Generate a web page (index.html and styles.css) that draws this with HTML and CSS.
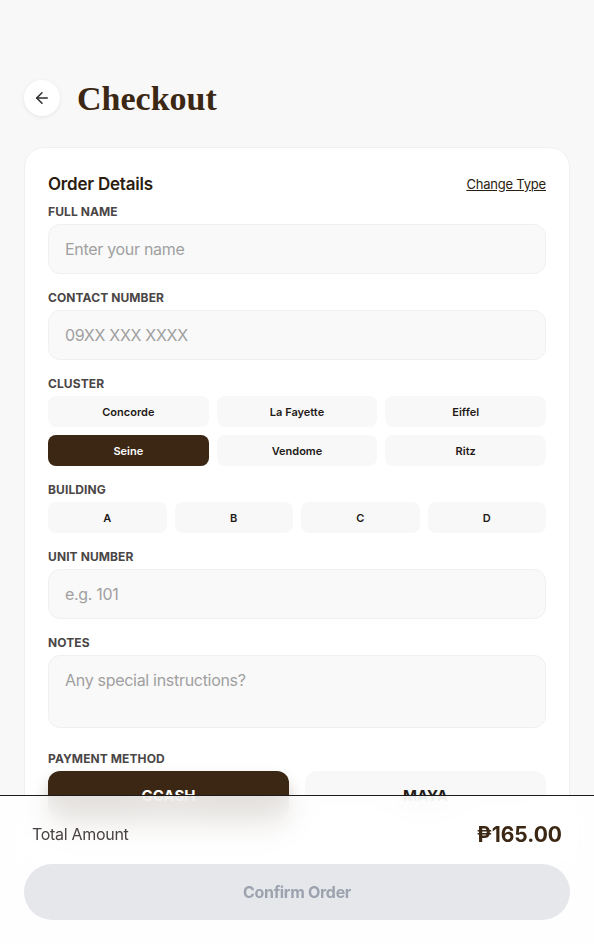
FILE: index.html
```html
<!DOCTYPE html>
<html lang="en">
<head>
<meta charset="utf-8">
<title>Checkout</title>
<link rel="stylesheet" href="styles.css">
</head>
<body>
<main class="page">
  <header class="header">
    <button class="back" aria-label="Back">
      <svg width="18" height="18" viewBox="0 0 24 24" fill="none" stroke="#2b2b2b" stroke-width="2" stroke-linecap="round" stroke-linejoin="round"><path d="M19 12H5"/><path d="M12 19l-7-7 7-7"/></svg>
    </button>
    <h1 class="title">Checkout</h1>
  </header>

  <section class="card">
    <div class="card-head">
      <h2 class="card-title">Order Details</h2>
      <a class="change" href="#">Change Type</a>
    </div>
    <div class="fields">
      <div class="field">
        <label class="label">Full Name</label>
        <input class="input" type="text" placeholder="Enter your name">
      </div>
      <div class="field">
        <label class="label">Contact Number</label>
        <input class="input" type="text" placeholder="09XX XXX XXXX">
      </div>
      <div class="field">
        <label class="label">Cluster</label>
        <div class="grid grid-3">
          <button class="opt">Concorde</button>
          <button class="opt">La Fayette</button>
          <button class="opt">Eiffel</button>
          <button class="opt opt-active">Seine</button>
          <button class="opt">Vendome</button>
          <button class="opt">Ritz</button>
        </div>
      </div>
      <div class="field">
        <label class="label">Building</label>
        <div class="grid grid-4">
          <button class="opt">A</button>
          <button class="opt">B</button>
          <button class="opt">C</button>
          <button class="opt">D</button>
        </div>
      </div>
      <div class="field">
        <label class="label">Unit Number</label>
        <input class="input" type="text" placeholder="e.g. 101">
      </div>
      <div class="field field-notes">
        <label class="label">Notes</label>
        <textarea class="input textarea" placeholder="Any special instructions?"></textarea>
      </div>
      <div class="field">
        <label class="label">Payment Method</label>
        <div class="pay">
          <button class="pay-btn pay-active">GCASH</button>
          <button class="pay-btn">MAYA</button>
        </div>
      </div>
    </div>
  </section>
</main>

<footer class="bar">
  <div class="total">
    <span class="total-label">Total Amount</span>
    <span class="total-value">₱165.00</span>
  </div>
  <button class="confirm" disabled>Confirm Order</button>
</footer>
</body>
</html>
```

FILE: styles.css
```css
* { box-sizing: border-box; }

body {
  margin: 0;
  background: #f8f8f8;
  font-family: "Inter", "Noto Sans", "DejaVu Sans", sans-serif;
  color: #2b1d10;
}

.page {
  padding: 80px 24px 200px;
}

.header {
  display: flex;
  align-items: center;
  gap: 17px;
  height: 36px;
}

.back {
  width: 36px;
  height: 36px;
  border-radius: 50%;
  border: none;
  background: #ffffff;
  box-shadow: 0 1px 4px rgba(0, 0, 0, 0.08);
  display: flex;
  align-items: center;
  justify-content: center;
  padding: 0;
}

.title {
  margin: 0;
  font-family: "Liberation Serif", "DejaVu Serif", serif;
  font-weight: 700;
  font-size: 34px;
  line-height: 1;
  color: #3b2713;
  padding-top: 1px;
}

.card {
  margin-top: 31px;
  background: #ffffff;
  border: 1px solid #f0f0f0;
  border-radius: 20px;
  padding: 23px 23px 40px;
}

.card-head {
  display: flex;
  justify-content: space-between;
  align-items: center;
  height: 26px;
  margin-bottom: 6px;
}

.card-title {
  margin: 0;
  font-size: 17px;
  font-weight: 600;
  color: #2b1d10;
  letter-spacing: -0.2px;
}

.change {
  font-size: 13px;
  color: #2b1d10;
  text-decoration: underline;
  letter-spacing: -0.2px;
}

.fields {
  display: flex;
  flex-direction: column;
  gap: 15px;
}

.label {
  display: block;
  font-size: 12px;
  line-height: 16px;
  font-weight: 700;
  text-transform: uppercase;
  color: #4a4646;
  letter-spacing: 0.1px;
  padding-top: 1px;
  margin-bottom: 4px;
}

.input {
  display: block;
  width: 100%;
  height: 50px;
  border: 1px solid #f0f0f0;
  background: #f9f9f9;
  border-radius: 12px;
  padding: 0 16px;
  font-family: inherit;
  font-size: 16px;
  color: #2b1d10;
  outline: none;
}

.input::placeholder {
  color: #a0a0a0;
  letter-spacing: -0.3px;
}

.textarea {
  height: 73px;
  padding: 12px 16px;
  line-height: 24px;
  resize: none;
}

.field-notes {
  margin-bottom: 7px;
}

.grid {
  display: grid;
  gap: 8px;
}

.grid-3 { grid-template-columns: repeat(3, 1fr); }
.grid-4 { grid-template-columns: repeat(4, 1fr); }

.opt {
  height: 31px;
  border: none;
  border-radius: 8px;
  background: #f8f8f8;
  font-family: inherit;
  font-size: 11px;
  font-weight: 600;
  color: #1f1a17;
  padding: 0;
}

.opt-active {
  background: #3b2713;
  color: #ffffff;
}

.pay {
  display: grid;
  grid-template-columns: 1fr 1fr;
  gap: 16px;
}

.pay-btn {
  height: 48px;
  border: none;
  border-radius: 12px;
  background: #f8f8f8;
  font-family: inherit;
  font-size: 15px;
  font-weight: 700;
  color: #1f1a17;
}

.pay-active {
  background: #3b2713;
  color: #ffffff;
  box-shadow: 0 10px 18px -3px rgba(59, 39, 19, 0.4);
}

.bar {
  position: fixed;
  left: 0;
  right: 0;
  bottom: 0;
  height: 149px;
  border-top: 1px solid #1c1c1c;
  background: rgba(255, 255, 255, 0.86);
  backdrop-filter: blur(14px);
  padding: 24px 24px 24px;
}

.total {
  display: flex;
  justify-content: space-between;
  align-items: center;
  height: 28px;
  padding: 0 8px;
  margin-bottom: 16px;
}

.total-label {
  font-size: 16px;
  color: #4a4242;
  letter-spacing: -0.3px;
}

.total-value {
  font-size: 21px;
  font-weight: 700;
  color: #3b2713;
}

.confirm {
  display: block;
  width: 100%;
  height: 56px;
  border: none;
  border-radius: 28px;
  background: #e5e7eb;
  color: #9ca3af;
  font-family: inherit;
  font-size: 16px;
  font-weight: 700;
  letter-spacing: -0.3px;
}
```
